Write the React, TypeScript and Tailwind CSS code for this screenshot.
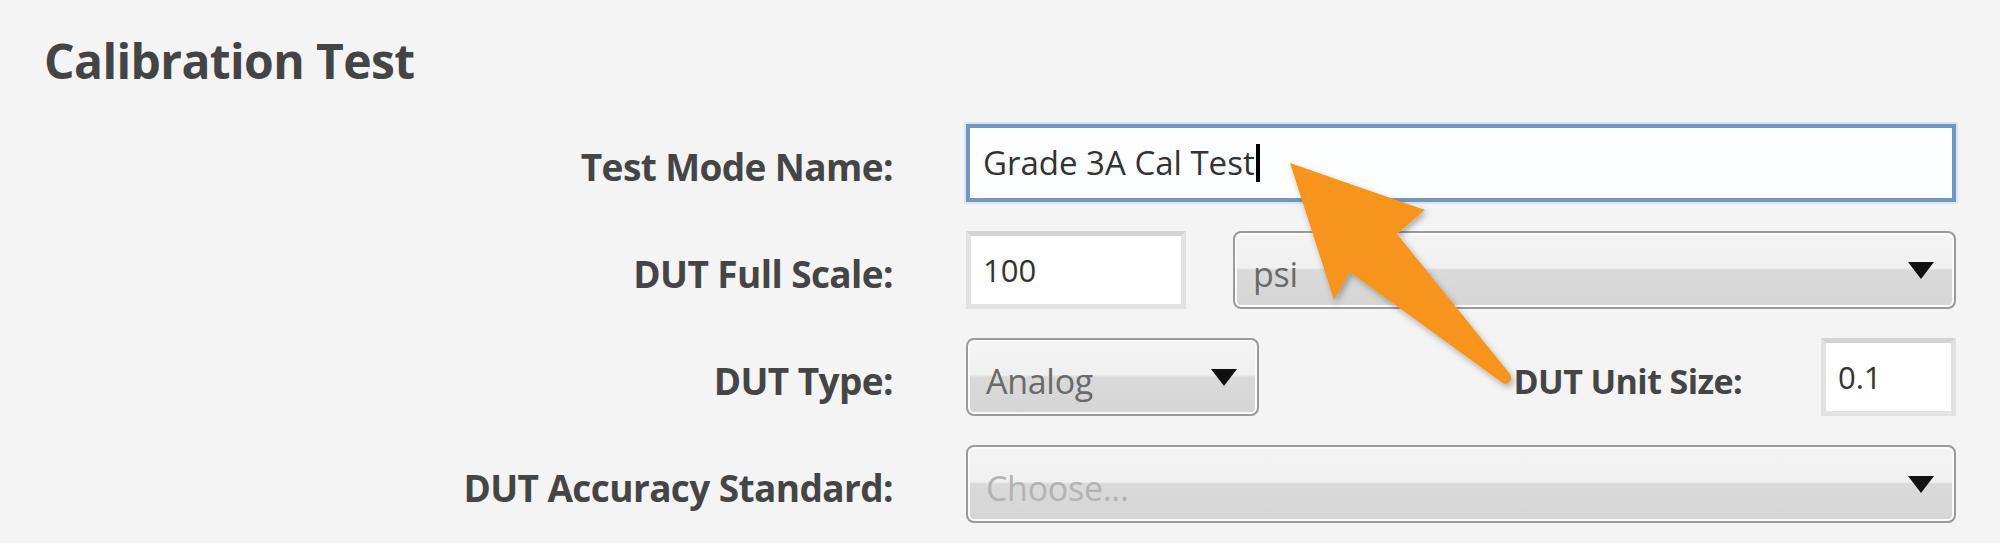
const font = { fontFamily: '"Open Sans", "Noto Sans", sans-serif' };

function Caret() {
  return (
    <svg width="26" height="17" viewBox="0 0 26 17" className="shrink-0">
      <polygon points="0,0 26,0 13,17" fill="#111" />
    </svg>
  );
}

function Label({ children }: { children: React.ReactNode }) {
  return (
    <div className="flex h-[78px] items-center justify-end pt-[8px] text-[37px] font-bold tracking-[-0.6px] text-[#454545]">
      {children}
    </div>
  );
}

function Select({ text, muted, className }: { text: string; muted?: boolean; className?: string }) {
  return (
    <div
      className={
        "flex h-[78px] items-center justify-between rounded-[8px] border-2 border-[#9b9b9b] bg-[linear-gradient(to_bottom,#f4f4f4_0%,#f0f0f0_47%,#dadada_50%,#d5d5d5_100%)] pl-[18px] pr-[20px] shadow-[inset_0_0_0_2px_#fbfbfb] " +
        (className ?? "")
      }
    >
      <span className={"pt-[8px] text-[34px] tracking-[-0.3px] " + (muted ? "text-[#b3b3b3]" : "text-[#6a6a6a]")}>
        {text}
      </span>
      <Caret />
    </div>
  );
}

function TextBox({ text, className }: { text: string; className?: string }) {
  return (
    <div
      className={
        "flex h-[78px] items-center border-[5px] border-[#e2e2e2] border-t-[#d4d4d4] bg-white pl-[12px] text-[31px] text-[#333] " +
        (className ?? "")
      }
    >
      {text}
    </div>
  );
}

export default function App() {
  return (
    <div className="relative h-[543px] w-[2000px] overflow-hidden bg-[#f4f4f4]" style={font}>
      <h1 className="pl-[44px] pt-[37px] text-[48px] font-bold leading-none tracking-[-0.6px] text-[#444]">
        Calibration Test
      </h1>

      <div className="mt-[39px] grid grid-cols-[893px_990px] gap-x-[73px] gap-y-[29px]">
        <Label>Test Mode Name:</Label>
        <div className="flex h-[78px] items-center border-[4px] border-[#6f97c1] bg-[#fcfeff] pl-[13px] text-[33px] text-[#333] shadow-[0_0_0_2px_#d6e6f5]">
          <span>Grade 3A Cal Test</span>
          <span className="ml-[1px] inline-block h-[38px] w-[4px] bg-black" />
        </div>

        <Label>DUT Full Scale:</Label>
        <div className="flex gap-[47px]">
          <TextBox text="100" className="w-[220px]" />
          <Select text="psi" className="flex-1" />
        </div>

        <Label>DUT Type:</Label>
        <div className="flex items-center">
          <Select text="Analog" className="w-[293px]" />
          <div className="flex-1 pr-[79px] pt-[8px] text-right text-[34px] font-bold tracking-[-0.6px] text-[#454545]">
            DUT Unit Size:
          </div>
          <TextBox text="0.1" className="w-[135px] text-[28px]" />
        </div>

        <Label>DUT Accuracy Standard:</Label>
        <Select text="Choose..." muted />
      </div>

      <svg className="pointer-events-none absolute left-0 top-0" width="2000" height="543" viewBox="0 0 2000 543">
        <defs>
          <filter id="sh" x="-20%" y="-20%" width="140%" height="140%">
            <feDropShadow dx="2" dy="3" stdDeviation="3" floodColor="#000" floodOpacity="0.3" />
          </filter>
        </defs>
        <path
          d="M1290 163 L1425 210 L1397 234 L1510 374 Q1514 383 1504 384 L1350 272 L1334 300 Z"
          fill="#f7941d"
          filter="url(#sh)"
        />
      </svg>
    </div>
  );
}
